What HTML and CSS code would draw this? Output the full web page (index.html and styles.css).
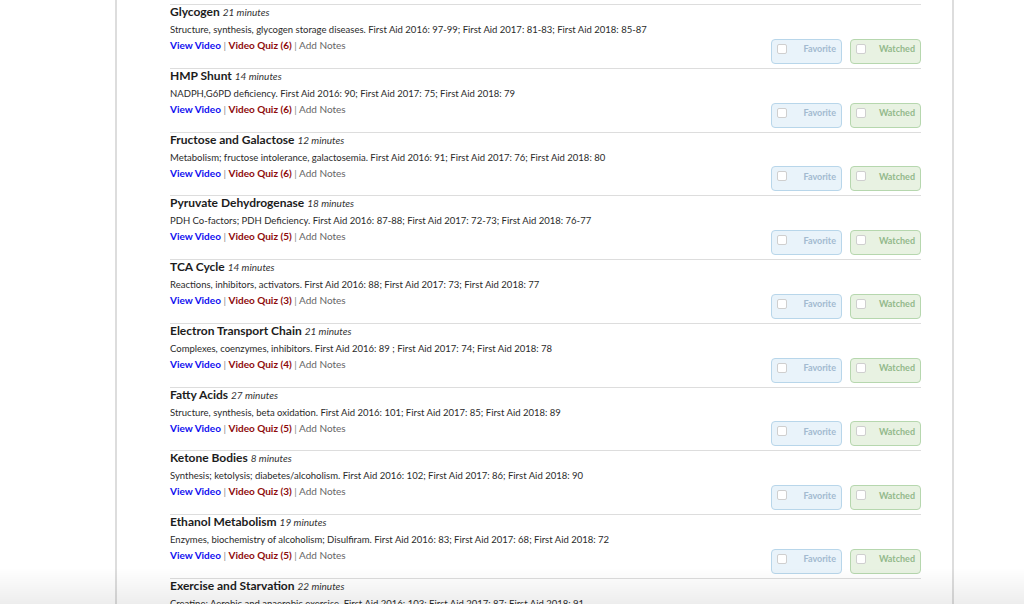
FILE: index.html
```html
<!DOCTYPE html>
<html lang="en">
<head>
    <meta charset="UTF-8">
    <meta name="viewport" content="width=device-width, initial-scale=1.0">
    <title>Biochemistry Videos</title>
    <link rel="stylesheet" href="styles.css">
</head>
<body>
    <div class="panel">
        <div class="lesson">
            <div class="lesson-info">
                <div class="lesson-title">Glycogen <span class="duration">21 minutes</span></div>
                <div class="lesson-desc">Structure, synthesis, glycogen storage diseases. First Aid 2016: 97-99; First Aid 2017: 81-83; First Aid 2018: 85-87</div>
                <div class="lesson-links"><a class="view-link" href="#">View Video</a> <span class="sep">|</span> <a class="quiz-link" href="#">Video Quiz (6)</a> <span class="sep">|</span> <a class="notes-link" href="#">Add Notes</a></div>
            </div>
            <div class="lesson-actions">
                <label class="toggle favorite"><input type="checkbox"> <span>Favorite</span></label>
                <label class="toggle watched"><input type="checkbox"> <span>Watched</span></label>
            </div>
        </div>
        <div class="lesson">
            <div class="lesson-info">
                <div class="lesson-title">HMP Shunt <span class="duration">14 minutes</span></div>
                <div class="lesson-desc">NADPH,G6PD deficiency. First Aid 2016: 90; First Aid 2017: 75; First Aid 2018: 79</div>
                <div class="lesson-links"><a class="view-link" href="#">View Video</a> <span class="sep">|</span> <a class="quiz-link" href="#">Video Quiz (6)</a> <span class="sep">|</span> <a class="notes-link" href="#">Add Notes</a></div>
            </div>
            <div class="lesson-actions">
                <label class="toggle favorite"><input type="checkbox"> <span>Favorite</span></label>
                <label class="toggle watched"><input type="checkbox"> <span>Watched</span></label>
            </div>
        </div>
        <div class="lesson">
            <div class="lesson-info">
                <div class="lesson-title">Fructose and Galactose <span class="duration">12 minutes</span></div>
                <div class="lesson-desc">Metabolism; fructose intolerance, galactosemia. First Aid 2016: 91; First Aid 2017: 76; First Aid 2018: 80</div>
                <div class="lesson-links"><a class="view-link" href="#">View Video</a> <span class="sep">|</span> <a class="quiz-link" href="#">Video Quiz (6)</a> <span class="sep">|</span> <a class="notes-link" href="#">Add Notes</a></div>
            </div>
            <div class="lesson-actions">
                <label class="toggle favorite"><input type="checkbox"> <span>Favorite</span></label>
                <label class="toggle watched"><input type="checkbox"> <span>Watched</span></label>
            </div>
        </div>
        <div class="lesson">
            <div class="lesson-info">
                <div class="lesson-title">Pyruvate Dehydrogenase <span class="duration">18 minutes</span></div>
                <div class="lesson-desc">PDH Co-factors; PDH Deficiency. First Aid 2016: 87-88; First Aid 2017: 72-73; First Aid 2018: 76-77</div>
                <div class="lesson-links"><a class="view-link" href="#">View Video</a> <span class="sep">|</span> <a class="quiz-link" href="#">Video Quiz (5)</a> <span class="sep">|</span> <a class="notes-link" href="#">Add Notes</a></div>
            </div>
            <div class="lesson-actions">
                <label class="toggle favorite"><input type="checkbox"> <span>Favorite</span></label>
                <label class="toggle watched"><input type="checkbox"> <span>Watched</span></label>
            </div>
        </div>
        <div class="lesson">
            <div class="lesson-info">
                <div class="lesson-title">TCA Cycle <span class="duration">14 minutes</span></div>
                <div class="lesson-desc">Reactions, inhibitors, activators. First Aid 2016: 88; First Aid 2017: 73; First Aid 2018: 77</div>
                <div class="lesson-links"><a class="view-link" href="#">View Video</a> <span class="sep">|</span> <a class="quiz-link" href="#">Video Quiz (3)</a> <span class="sep">|</span> <a class="notes-link" href="#">Add Notes</a></div>
            </div>
            <div class="lesson-actions">
                <label class="toggle favorite"><input type="checkbox"> <span>Favorite</span></label>
                <label class="toggle watched"><input type="checkbox"> <span>Watched</span></label>
            </div>
        </div>
        <div class="lesson">
            <div class="lesson-info">
                <div class="lesson-title">Electron Transport Chain <span class="duration">21 minutes</span></div>
                <div class="lesson-desc">Complexes, coenzymes, inhibitors. First Aid 2016: 89 ; First Aid 2017: 74; First Aid 2018: 78</div>
                <div class="lesson-links"><a class="view-link" href="#">View Video</a> <span class="sep">|</span> <a class="quiz-link" href="#">Video Quiz (4)</a> <span class="sep">|</span> <a class="notes-link" href="#">Add Notes</a></div>
            </div>
            <div class="lesson-actions">
                <label class="toggle favorite"><input type="checkbox"> <span>Favorite</span></label>
                <label class="toggle watched"><input type="checkbox"> <span>Watched</span></label>
            </div>
        </div>
        <div class="lesson">
            <div class="lesson-info">
                <div class="lesson-title">Fatty Acids <span class="duration">27 minutes</span></div>
                <div class="lesson-desc">Structure, synthesis, beta oxidation. First Aid 2016: 101; First Aid 2017: 85; First Aid 2018: 89</div>
                <div class="lesson-links"><a class="view-link" href="#">View Video</a> <span class="sep">|</span> <a class="quiz-link" href="#">Video Quiz (5)</a> <span class="sep">|</span> <a class="notes-link" href="#">Add Notes</a></div>
            </div>
            <div class="lesson-actions">
                <label class="toggle favorite"><input type="checkbox"> <span>Favorite</span></label>
                <label class="toggle watched"><input type="checkbox"> <span>Watched</span></label>
            </div>
        </div>
        <div class="lesson">
            <div class="lesson-info">
                <div class="lesson-title">Ketone Bodies <span class="duration">8 minutes</span></div>
                <div class="lesson-desc">Synthesis; ketolysis; diabetes/alcoholism. First Aid 2016: 102; First Aid 2017: 86; First Aid 2018: 90</div>
                <div class="lesson-links"><a class="view-link" href="#">View Video</a> <span class="sep">|</span> <a class="quiz-link" href="#">Video Quiz (3)</a> <span class="sep">|</span> <a class="notes-link" href="#">Add Notes</a></div>
            </div>
            <div class="lesson-actions">
                <label class="toggle favorite"><input type="checkbox"> <span>Favorite</span></label>
                <label class="toggle watched"><input type="checkbox"> <span>Watched</span></label>
            </div>
        </div>
        <div class="lesson">
            <div class="lesson-info">
                <div class="lesson-title">Ethanol Metabolism <span class="duration">19 minutes</span></div>
                <div class="lesson-desc">Enzymes, biochemistry of alcoholism; Disulfiram. First Aid 2016: 83; First Aid 2017: 68; First Aid 2018: 72</div>
                <div class="lesson-links"><a class="view-link" href="#">View Video</a> <span class="sep">|</span> <a class="quiz-link" href="#">Video Quiz (5)</a> <span class="sep">|</span> <a class="notes-link" href="#">Add Notes</a></div>
            </div>
            <div class="lesson-actions">
                <label class="toggle favorite"><input type="checkbox"> <span>Favorite</span></label>
                <label class="toggle watched"><input type="checkbox"> <span>Watched</span></label>
            </div>
        </div>
        <div class="lesson">
            <div class="lesson-info">
                <div class="lesson-title">Exercise and Starvation <span class="duration">22 minutes</span></div>
                <div class="lesson-desc">Creatine; Aerobic and anaerobic exercise. First Aid 2016: 103; First Aid 2017: 87; First Aid 2018: 91</div>
                <div class="lesson-links"><a class="view-link" href="#">View Video</a> <span class="sep">|</span> <a class="quiz-link" href="#">Video Quiz (4)</a> <span class="sep">|</span> <a class="notes-link" href="#">Add Notes</a></div>
            </div>
            <div class="lesson-actions">
                <label class="toggle favorite"><input type="checkbox"> <span>Favorite</span></label>
                <label class="toggle watched"><input type="checkbox"> <span>Watched</span></label>
            </div>
        </div>
    </div>
    <div class="bottom-shade"></div>
</body>
</html>
```

FILE: styles.css
```css
body {
    margin: 0;
    font-family: Lato, 'Open Sans', sans-serif;
    background-color: #fff;
    color: #222;
    overflow: hidden;
}

a {
    text-decoration: none;
}

.panel {
    width: 839px;
    box-sizing: border-box;
    margin-left: 115px;
    padding: 4px 31px 0 53px;
    border-left: 2px solid #ddd;
    border-right: 2px solid #ddd;
    background-color: #fff;
}

.lesson {
    height: 63.78px;
    box-sizing: border-box;
    border-top: 1px solid #ddd;
    padding-bottom: 4px;
    display: flex;
    justify-content: space-between;
    align-items: flex-end;
}

.lesson-info {
    align-self: flex-start;
}

.lesson-title {
    font-size: 12px;
    font-weight: bold;
    line-height: 14px;
    color: #1c1c1c;
}

.duration {
    font-size: 10px;
    font-weight: normal;
    font-style: italic;
    color: #333;
}

.lesson-desc {
    margin-top: 4px;
    font-size: 9.5px;
    line-height: 14px;
    color: #2a2a2a;
}

.lesson-links {
    margin-top: 1px;
    font-size: 10px;
    line-height: 14px;
}

.view-link {
    color: #1010f0;
    font-weight: bold;
}

.quiz-link {
    color: #8e0b0b;
    font-weight: bold;
}

.notes-link {
    color: #666;
}

.sep {
    color: #888;
}

.lesson-actions {
    display: flex;
    gap: 8px;
}

.toggle {
    width: 71px;
    height: 25px;
    box-sizing: border-box;
    padding: 0 5px 5px 5px;
    border: 1px solid;
    border-radius: 4px;
    display: flex;
    align-items: center;
    justify-content: space-between;
    font-size: 9px;
    font-weight: bold;
}

.toggle input {
    appearance: none;
    width: 10px;
    height: 10px;
    margin: 0;
    background-color: #fff;
    border: 1px solid #cfcfcf;
    border-radius: 2px;
}

.favorite {
    background-color: #e9f3fa;
    border-color: #b8d6ea;
    color: #a2bad0;
}

.watched {
    background-color: #e8f2e2;
    border-color: #b6d7ae;
    color: #93b98b;
}

.bottom-shade {
    position: fixed;
    left: 0;
    right: 0;
    bottom: 0;
    height: 36px;
    pointer-events: none;
    background: linear-gradient(to bottom, rgba(0, 0, 0, 0), rgba(0, 0, 0, 0.07));
}
```
